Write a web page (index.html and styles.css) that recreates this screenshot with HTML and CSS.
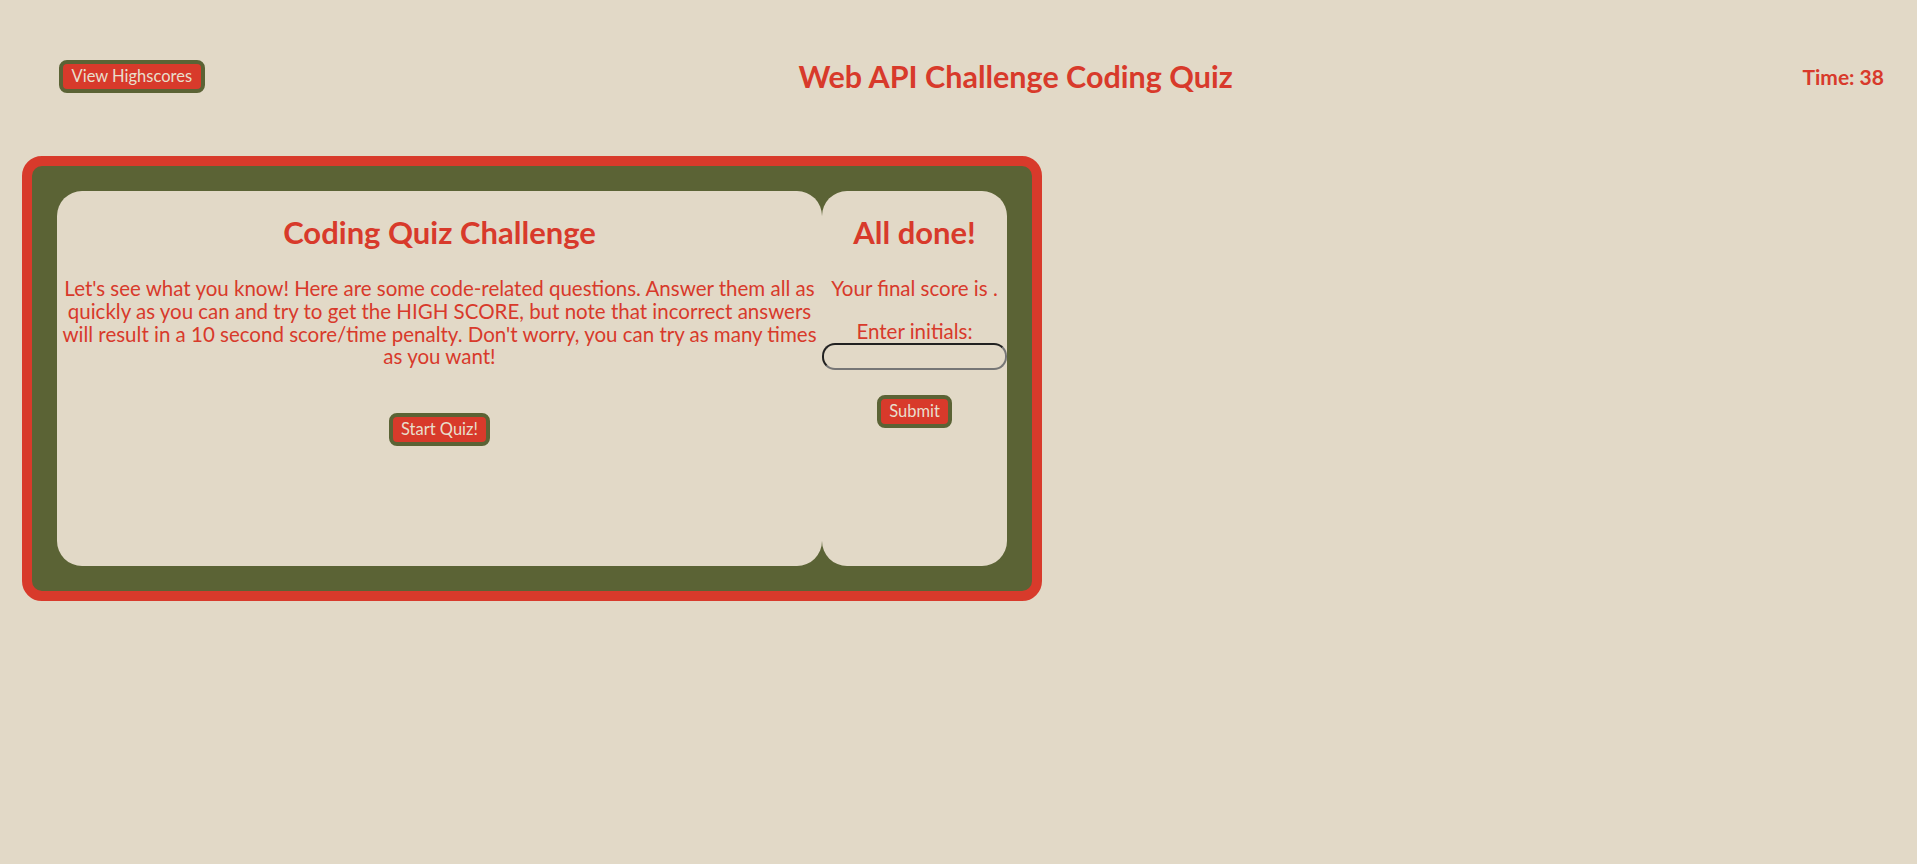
FILE: index.html
```html
<!DOCTYPE html>
<html lang="en">
<head>
  <meta charset="utf-8">
  <title>Web API Challenge Coding Quiz</title>
  <link rel="stylesheet" href="styles.css">
</head>
<body>
  <header class="topbar">
    <button class="btn" type="button">View Highscores</button>
    <h1 class="site-title">Web API Challenge Coding Quiz</h1>
    <div class="timer">Time: <span>38</span></div>
  </header>

  <main class="quiz-card">
    <section class="panel panel-intro">
      <h2 class="panel-title">Coding Quiz Challenge</h2>
      <p class="panel-text">Let's see what you know! Here are some code-related questions. Answer them all as quickly as you can and try to get the HIGH SCORE, but note that incorrect answers will result in a 10 second score/time penalty. Don't worry, you can try as many times as you want!</p>
      <button class="btn btn-start" type="button">Start Quiz!</button>
    </section>

    <section class="panel panel-done">
      <h2 class="panel-title">All done!</h2>
      <p class="panel-text score-line">Your final score is <span class="final-score"></span>.</p>
      <label class="initials-label" for="initials">Enter initials:</label>
      <input class="initials-input" id="initials" type="text">
      <button class="btn btn-submit" type="button">Submit</button>
    </section>
  </main>
</body>
</html>
```
FILE: styles.css
```css
body {
  margin: 0;
  background: #e2d9c7;
  color: #d83a2b;
  font-family: "Lato", "Open Sans", sans-serif;
}

.topbar {
  display: flex;
  align-items: center;
  justify-content: space-between;
  padding: 58px 33px 0 59px;
}

.btn {
  font-family: "Lato", "Open Sans", sans-serif;
  font-size: 16.5px;
  line-height: 21px;
  color: #e8dfcd;
  background: #d83a2b;
  border: 4px solid #5b6335;
  border-radius: 8px;
  padding: 2px 8.5px;
  cursor: pointer;
}

.site-title {
  margin: 0 0 0 24px;
  font-size: 30.5px;
  font-weight: 700;
  line-height: 37px;
}

.timer {
  font-size: 21px;
  font-weight: 700;
}

.quiz-card {
  display: flex;
  width: fit-content;
  margin: 61px 0 0 22px;
  padding: 25px;
  background: #5b6335;
  border: 10px solid #d83a2b;
  border-radius: 20px;
}

.panel {
  display: flex;
  flex-direction: column;
  align-items: center;
  height: 375px;
  background: #e2d9c7;
  border-radius: 25px;
  text-align: center;
}

.panel-intro {
  width: 765px;
}

.panel-done {
  width: 185px;
}

.panel-title {
  margin: 23px 0 26px;
  font-size: 31px;
  font-weight: 700;
  line-height: 37px;
}

.panel-text {
  margin: 0;
  font-size: 20.5px;
  line-height: 22.8px;
}

.btn-start {
  margin-top: 45px;
}

.score-line {
  margin-bottom: 20px;
}

.initials-label {
  display: block;
  font-size: 20.5px;
  line-height: 22.8px;
}

.initials-input {
  box-sizing: border-box;
  width: 185px;
  height: 27px;
  margin: 0;
  background: transparent;
  border-radius: 13px;
}

.btn-submit {
  margin-top: 25px;
}
```
